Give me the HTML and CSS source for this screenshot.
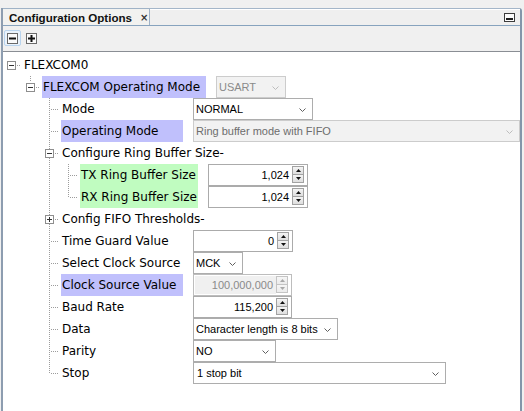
FILE: index.html
```html
<!DOCTYPE html>
<html>
<head>
<meta charset="utf-8">
<title>Configuration Options</title>
<link rel="stylesheet" href="styles.css">
</head>
<body>
<div class="panel">
  <div class="header">
    <div class="tab">
      <span class="tab-title">Configuration Options</span>
      <span class="tab-close">×</span>
    </div>
    <div class="header-rest">
      <svg class="minimize" width="11" height="9" viewBox="0 0 11 9"><rect x="0.5" y="0.5" width="10" height="8" fill="#fbfbfb" stroke="#3c3c3c"/><rect x="2" y="5" width="7" height="2" fill="#1e1e1e"/></svg>
    </div>
  </div>
  <div class="toolbar">
    <div class="tbtn hover">
      <svg width="11" height="11" viewBox="0 0 11 11"><rect x="0.5" y="0.5" width="10" height="10" fill="#fafafa" stroke="#6a6a6a"/><rect x="2" y="4.5" width="7" height="2" fill="#111"/></svg>
    </div>
    <div class="tbtn">
      <svg width="11" height="11" viewBox="0 0 11 11"><rect x="0.5" y="0.5" width="10" height="10" fill="#fafafa" stroke="#6a6a6a"/><rect x="2" y="4.5" width="7" height="2" fill="#111"/><rect x="4.5" y="2" width="2" height="7" fill="#111"/></svg>
    </div>
  </div>
  <div class="tree">
    <div class="rows">
      <div class="row">
        <span class="c tog-root"><span class="tog minus"></span></span>
        <span class="lbl">FLEXCOM0</span>
      </div>
      <div class="row">
        <span class="c"></span>
        <span class="c tog-l1"><span class="tog minus"></span></span>
        <span class="lbl w1 purple">FLEXCOM Operating Mode</span>
        <div class="combo dis cb-usart"><span class="txt">USART</span><svg class="chev" width="7" height="4" viewBox="0 0 7 4"><polyline points="0.5,0.5 3.5,3.5 6.5,0.5" fill="none" stroke="#bdbdbd"/></svg></div>
      </div>
      <div class="row">
        <span class="c"></span><span class="c"></span><span class="c tee"></span>
        <span class="lbl w2">Mode</span>
        <div class="combo cb-normal"><span class="txt">NORMAL</span><svg class="chev" width="7" height="4" viewBox="0 0 7 4"><polyline points="0.5,0.5 3.5,3.5 6.5,0.5" fill="none" stroke="#5f5f5f"/></svg></div>
      </div>
      <div class="row">
        <span class="c"></span><span class="c"></span><span class="c tee"></span>
        <span class="lbl w2 purple">Operating Mode</span>
        <div class="combo dis cb-ring"><span class="txt">Ring buffer mode with FIFO</span><svg class="chev" width="7" height="4" viewBox="0 0 7 4"><polyline points="0.5,0.5 3.5,3.5 6.5,0.5" fill="none" stroke="#bdbdbd"/></svg></div>
      </div>
      <div class="row">
        <span class="c"></span><span class="c"></span><span class="c tog-pipe"><span class="tog minus"></span></span>
        <span class="lbl">Configure Ring Buffer Size-</span>
      </div>
      <div class="row">
        <span class="c"></span><span class="c"></span><span class="c pipe"></span><span class="c tee"></span>
        <span class="lbl w3 green">TX Ring Buffer Size</span>
        <div class="spin sp-100"><span class="val">1,024</span><span class="btns"><span class="sbtn up"><svg width="5" height="3" viewBox="0 0 5 3"><polygon points="0,3 5,3 2.5,0" fill="#111"/></svg></span><span class="sbtn down"><svg width="5" height="3" viewBox="0 0 5 3"><polygon points="0,0 5,0 2.5,3" fill="#111"/></svg></span></span></div>
      </div>
      <div class="row">
        <span class="c"></span><span class="c"></span><span class="c pipe"></span><span class="c ell"></span>
        <span class="lbl w3 green">RX Ring Buffer Size</span>
        <div class="spin sp-100"><span class="val">1,024</span><span class="btns"><span class="sbtn up"><svg width="5" height="3" viewBox="0 0 5 3"><polygon points="0,3 5,3 2.5,0" fill="#111"/></svg></span><span class="sbtn down"><svg width="5" height="3" viewBox="0 0 5 3"><polygon points="0,0 5,0 2.5,3" fill="#111"/></svg></span></span></div>
      </div>
      <div class="row">
        <span class="c"></span><span class="c"></span><span class="c tog-pipe"><span class="tog plus"></span></span>
        <span class="lbl">Config FIFO Thresholds-</span>
      </div>
      <div class="row">
        <span class="c"></span><span class="c"></span><span class="c tee"></span>
        <span class="lbl w2">Time Guard Value</span>
        <div class="spin sp-100"><span class="val">0</span><span class="btns"><span class="sbtn up"><svg width="5" height="3" viewBox="0 0 5 3"><polygon points="0,3 5,3 2.5,0" fill="#111"/></svg></span><span class="sbtn down"><svg width="5" height="3" viewBox="0 0 5 3"><polygon points="0,0 5,0 2.5,3" fill="#111"/></svg></span></span></div>
      </div>
      <div class="row">
        <span class="c"></span><span class="c"></span><span class="c tee"></span>
        <span class="lbl w2">Select Clock Source</span>
        <div class="combo cb-mck"><span class="txt">MCK</span><svg class="chev" width="7" height="4" viewBox="0 0 7 4"><polyline points="0.5,0.5 3.5,3.5 6.5,0.5" fill="none" stroke="#5f5f5f"/></svg></div>
      </div>
      <div class="row">
        <span class="c"></span><span class="c"></span><span class="c tee"></span>
        <span class="lbl w2 purple">Clock Source Value</span>
        <div class="spin dis sp-99"><span class="val">100,000,000</span><span class="btns"><span class="sbtn up"><svg width="5" height="3" viewBox="0 0 5 3"><polygon points="0,3 5,3 2.5,0" fill="#a8a8a8"/></svg></span><span class="sbtn down"><svg width="5" height="3" viewBox="0 0 5 3"><polygon points="0,0 5,0 2.5,3" fill="#a8a8a8"/></svg></span></span></div>
      </div>
      <div class="row">
        <span class="c"></span><span class="c"></span><span class="c tee"></span>
        <span class="lbl w2">Baud Rate</span>
        <div class="spin sp-99"><span class="val">115,200</span><span class="btns"><span class="sbtn up"><svg width="5" height="3" viewBox="0 0 5 3"><polygon points="0,3 5,3 2.5,0" fill="#111"/></svg></span><span class="sbtn down"><svg width="5" height="3" viewBox="0 0 5 3"><polygon points="0,0 5,0 2.5,3" fill="#111"/></svg></span></span></div>
      </div>
      <div class="row">
        <span class="c"></span><span class="c"></span><span class="c tee"></span>
        <span class="lbl w2">Data</span>
        <div class="combo cb-data"><span class="txt">Character length is 8 bits</span><svg class="chev" width="7" height="4" viewBox="0 0 7 4"><polyline points="0.5,0.5 3.5,3.5 6.5,0.5" fill="none" stroke="#5f5f5f"/></svg></div>
      </div>
      <div class="row">
        <span class="c"></span><span class="c"></span><span class="c tee"></span>
        <span class="lbl w2">Parity</span>
        <div class="combo cb-parity"><span class="txt">NO</span><svg class="chev" width="7" height="4" viewBox="0 0 7 4"><polyline points="0.5,0.5 3.5,3.5 6.5,0.5" fill="none" stroke="#5f5f5f"/></svg></div>
      </div>
      <div class="row">
        <span class="c"></span><span class="c"></span><span class="c ell"></span>
        <span class="lbl w2">Stop</span>
        <div class="combo cb-stop"><span class="txt">1 stop bit</span><svg class="chev" width="7" height="4" viewBox="0 0 7 4"><polyline points="0.5,0.5 3.5,3.5 6.5,0.5" fill="none" stroke="#5f5f5f"/></svg></div>
      </div>
    </div>
  </div>
</div>
</body>
</html>
```

FILE: styles.css
```css
* { box-sizing: border-box; }
html, body { margin: 0; padding: 0; }
body {
  background: #f0f0f0;
  width: 524px;
  height: 411px;
  overflow: hidden;
  font-family: "DejaVu Sans", Verdana, sans-serif;
}

.panel {
  margin: 8px 0 0 1px;
  width: 521px;
  height: 403px;
  display: flex;
  flex-direction: column;
  border-left: 2px solid #8d9db0;
  border-right: 2px solid #8396aa;
  border-top-right-radius: 3px;
}

/* header with tab */
.header {
  height: 18px;
  display: flex;
  border-bottom: 1px solid #87a3be;
  flex: none;
}
.tab {
  width: 147px;
  height: 17px;
  display: flex;
  align-items: center;
  border-top: 1px solid #9fb2c6;
  border-right: 1px solid #9fb2c6;
  background: #f2f2f0;
  padding-left: 6px;
}
.tab-title {
  font-family: "Liberation Sans", Arial, sans-serif;
  font-weight: bold;
  font-size: 11.6px;
  color: #111;
}
.tab-close {
  font-family: "DejaVu Sans", sans-serif;
  font-weight: bold;
  font-size: 10px;
  color: #333;
  margin-left: 8px;
}
.header-rest {
  flex: 1;
  height: 17px;
  border-top: 1px solid #a4b6c9;
  box-shadow: inset 0 1px #ffffff;
  background: #efefef;
  display: flex;
  justify-content: flex-end;
  align-items: center;
  padding-right: 5px;
}
.minimize { display: block; margin-top: 1px; }

/* toolbar */
.toolbar {
  height: 26px;
  flex: none;
  display: flex;
  align-items: flex-start;
  padding: 4px 0 0 1px;
  gap: 2px;
  border-bottom: 1px solid #8a8e94;
  background: #f0f0f0;
}
.tbtn {
  width: 17px;
  height: 16px;
  display: flex;
  align-items: center;
  justify-content: center;
  border: 1px solid transparent;
  border-radius: 2px;
}
.tbtn svg { display: block; }
.tbtn.hover {
  border-color: #b9d4ee;
  background: #eaf3fc;
}

/* tree */
.tree {
  flex: 1;
  background: #ffffff;
  overflow: hidden;
  padding-top: 2px;
}
.rows { margin-left: -1px; }
.row {
  display: flex;
  align-items: center;
  height: 22px;
}
.c {
  width: 19px;
  height: 22px;
  flex: none;
  display: flex;
  align-items: center;
  background-repeat: no-repeat;
}
.pipe {
  background-image: repeating-linear-gradient(to bottom, #9c9c9c 0 1px, transparent 1px 2px);
  background-size: 1px 100%;
  background-position: 9px 0;
}
.tee {
  background-image:
    repeating-linear-gradient(to bottom, #9c9c9c 0 1px, transparent 1px 2px),
    repeating-linear-gradient(to right, #9c9c9c 0 1px, transparent 1px 2px);
  background-size: 1px 100%, 10px 1px;
  background-position: 9px 0, 11px 11px;
}
.ell {
  background-image:
    repeating-linear-gradient(to bottom, #9c9c9c 0 1px, transparent 1px 2px),
    repeating-linear-gradient(to right, #9c9c9c 0 1px, transparent 1px 2px);
  background-size: 1px 12px, 10px 1px;
  background-position: 9px 0, 11px 11px;
}
.tog-root {
  background-image: repeating-linear-gradient(to right, #9c9c9c 0 1px, transparent 1px 2px);
  background-size: 6px 1px;
  background-position: 15px 11px;
}
.tog-l1 {
  background-image:
    repeating-linear-gradient(to bottom, #9c9c9c 0 1px, transparent 1px 2px),
    repeating-linear-gradient(to right, #9c9c9c 0 1px, transparent 1px 2px);
  background-size: 1px 6px, 6px 1px;
  background-position: 9px 0, 15px 11px;
}
.tog-pipe {
  background-image:
    repeating-linear-gradient(to bottom, #9c9c9c 0 1px, transparent 1px 2px),
    repeating-linear-gradient(to right, #9c9c9c 0 1px, transparent 1px 2px);
  background-size: 1px 100%, 6px 1px;
  background-position: 9px 0, 15px 11px;
}
.tog {
  width: 9px;
  height: 9px;
  margin-left: 5px;
  margin-top: 1px;
  border: 1px solid #8e8e8e;
  background-color: #fff;
  background-repeat: no-repeat;
}
.tog.minus {
  background-image: linear-gradient(#333, #333);
  background-size: 5px 1px;
  background-position: 1px 3px;
}
.tog.plus {
  background-image: linear-gradient(#333, #333), linear-gradient(#333, #333);
  background-size: 5px 1px, 1px 5px;
  background-position: 1px 3px, 3px 1px;
}

.lbl {
  margin-left: 2px;
  padding-left: 1px;
  height: 22px;
  line-height: 22px;
  font-size: 12px;
  color: #000;
  white-space: nowrap;
  flex: none;
}
.w1 { width: 164px; margin-right: 10px; }
.w2 { width: 122px; margin-right: 10px; }
.w3 { width: 118px; margin-right: 10px; }
.purple { background: #c0c0fc; }
.green { background: #c0fcc0; }

/* combo boxes */
.combo {
  height: 22px;
  flex: none;
  display: flex;
  align-items: center;
  border: 1px solid #adadad;
  background: #ffffff;
  padding-left: 2px;
  font-family: "Liberation Sans", Arial, sans-serif;
  font-size: 11px;
  color: #000;
}
.combo .txt { flex: 1; white-space: nowrap; overflow: hidden; }
.combo .chev { display: block; flex: none; margin: 1px 6px 0 4px; }
.combo.dis {
  background: #f2f2f2;
  border-color: #cccccc;
  color: #6d6d6d;
}
.cb-usart { width: 70px; }
.cb-usart .txt { color: #8a8a8a; }
.cb-normal { width: 120px; }
.cb-ring { width: 327px; }
.cb-mck { width: 50px; }
.cb-data { width: 145px; }
.cb-parity { width: 83px; }
.cb-stop { width: 253px; padding-left: 3px; }

/* spinners */
.spin {
  height: 22px;
  flex: none;
  display: flex;
  border: 1px solid #ababab;
  background: #fff;
  font-family: "Liberation Sans", Arial, sans-serif;
  font-size: 11px;
  color: #000;
}
.sp-100 { width: 100px; }
.sp-99 { width: 99px; }
.spin .val {
  flex: 1;
  text-align: right;
  line-height: 20px;
  padding-right: 3px;
}
.spin .btns {
  width: 12px;
  display: flex;
  flex-direction: column;
  margin: 1px 3px 0 0;
}
.sbtn {
  height: 9px;
  display: flex;
  align-items: center;
  justify-content: center;
  border: 1px solid #a2a2a2;
  background: linear-gradient(#f4f4f4, #dedede);
}
.sbtn svg { display: block; }
.sbtn.down { margin-top: -1px; }
.spin.dis { border-color: #bdbdbd; }
.spin.dis .val {
  background: #f0f0f0;
  color: #8a8a8a;
  margin: 1px 0 1px 1px;
  line-height: 18px;
}
.spin.dis .sbtn { border-color: #c4c4c4; background: linear-gradient(#f6f6f6, #ebebeb); }
```
